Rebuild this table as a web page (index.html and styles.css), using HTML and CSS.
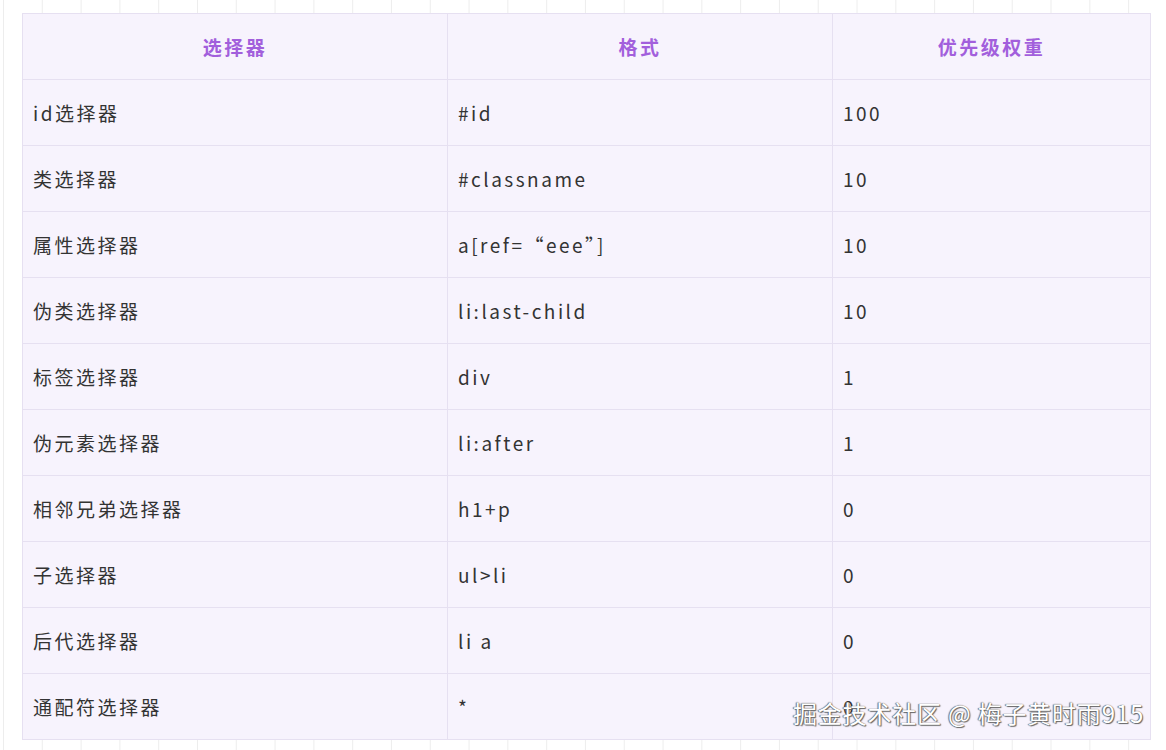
FILE: index.html
```html
<!DOCTYPE html>
<html lang="zh">
<head>
<meta charset="utf-8">
<link rel="stylesheet" href="styles.css">
</head>
<body>
<div class="page">
  <table class="spec">
    <colgroup>
      <col class="c1"><col class="c2"><col class="c3">
    </colgroup>
    <thead>
      <tr><th>选择器</th><th>格式</th><th>优先级权重</th></tr>
    </thead>
    <tbody>
      <tr><td>id选择器</td><td>#id</td><td>100</td></tr>
      <tr><td>类选择器</td><td>#classname</td><td>10</td></tr>
      <tr><td>属性选择器</td><td>a[ref=“eee”]</td><td>10</td></tr>
      <tr><td>伪类选择器</td><td>li:last-child</td><td>10</td></tr>
      <tr><td>标签选择器</td><td>div</td><td>1</td></tr>
      <tr><td>伪元素选择器</td><td>li:after</td><td>1</td></tr>
      <tr><td>相邻兄弟选择器</td><td>h1+p</td><td>0</td></tr>
      <tr><td>子选择器</td><td>ul&gt;li</td><td>0</td></tr>
      <tr><td>后代选择器</td><td>li a</td><td>0</td></tr>
      <tr><td>通配符选择器</td><td>*</td><td>0</td></tr>
    </tbody>
  </table>
  <div class="watermark">掘金技术社区 @ 梅子黄时雨915</div>
</div>
</body>
</html>
```
FILE: styles.css
```css
html, body {
  margin: 0;
  padding: 0;
}
body {
  width: 1166px;
  height: 750px;
  overflow: hidden;
  background-color: #ffffff;
  background-image: linear-gradient(to right, #ededed 1px, transparent 1px);
  background-size: 38.8px 100%;
  background-position: 3px 0;
  font-family: "Noto Sans CJK SC", "Noto Sans", sans-serif;
}
.page {
  position: relative;
  padding: 13px 0 0 22px;
  height: 737px;
}
.spec {
  border-collapse: collapse;
  width: 1128px;
  table-layout: fixed;
  background: #f7f3fd;
  border: 1px solid #e2dcef;
}
.c1 { width: 425px; }
.c2 { width: 385px; }
.c3 { width: 318px; }
.spec th, .spec td {
  box-sizing: border-box;
  height: 66px;
  padding: 0 10px;
  border: 1px solid #e6e0f1;
  vertical-align: middle;
  text-align: left;
  font-size: 19px;
  letter-spacing: 2.5px;
  color: #333333;
  font-weight: 400;
}
.spec th {
  text-align: center;
  color: #a25fdc;
  font-weight: 700;
  letter-spacing: 2.5px;
}
.watermark {
  position: absolute;
  right: 22px;
  bottom: 20px;
  font-size: 24px;
  letter-spacing: 0.8px;
  color: #ffffff;
  text-shadow: 0 0 1px #555, 1px 1px 1px #666, -1px 0 1px #777;
  font-family: "Noto Sans CJK SC", sans-serif;
}
```
